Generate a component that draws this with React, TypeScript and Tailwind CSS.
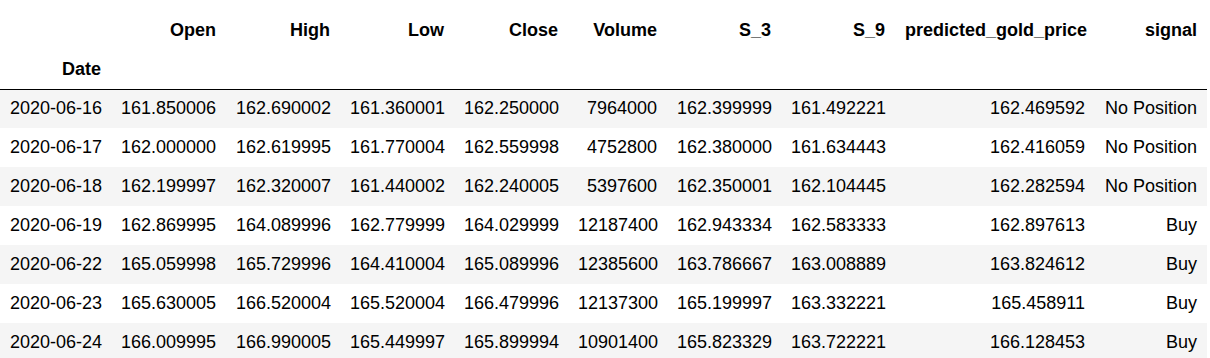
import React from 'react';

interface Row {
  date: string;
  open: string;
  high: string;
  low: string;
  close: string;
  volume: string;
  s3: string;
  s9: string;
  predicted: string;
  signal: string;
}

const rows: Row[] = [
  { date: '2020-06-16', open: '161.850006', high: '162.690002', low: '161.360001', close: '162.250000', volume: '7964000', s3: '162.399999', s9: '161.492221', predicted: '162.469592', signal: 'No Position' },
  { date: '2020-06-17', open: '162.000000', high: '162.619995', low: '161.770004', close: '162.559998', volume: '4752800', s3: '162.380000', s9: '161.634443', predicted: '162.416059', signal: 'No Position' },
  { date: '2020-06-18', open: '162.199997', high: '162.320007', low: '161.440002', close: '162.240005', volume: '5397600', s3: '162.350001', s9: '162.104445', predicted: '162.282594', signal: 'No Position' },
  { date: '2020-06-19', open: '162.869995', high: '164.089996', low: '162.779999', close: '164.029999', volume: '12187400', s3: '162.943334', s9: '162.583333', predicted: '162.897613', signal: 'Buy' },
  { date: '2020-06-22', open: '165.059998', high: '165.729996', low: '164.410004', close: '165.089996', volume: '12385600', s3: '163.786667', s9: '163.008889', predicted: '163.824612', signal: 'Buy' },
  { date: '2020-06-23', open: '165.630005', high: '166.520004', low: '165.520004', close: '166.479996', volume: '12137300', s3: '165.199997', s9: '163.332221', predicted: '165.458911', signal: 'Buy' },
  { date: '2020-06-24', open: '166.009995', high: '166.990005', low: '165.449997', close: '165.899994', volume: '10901400', s3: '165.823329', s9: '163.722221', predicted: '166.128453', signal: 'Buy' },
];

const columns = ['Open', 'High', 'Low', 'Close', 'Volume', 'S_3', 'S_9', 'predicted_gold_price', 'signal'];
const widths = [111, 115, 114, 114, 114, 99, 114, 114, 200, 112];

export default function App() {
  return (
    <div className="bg-white pt-[11px] h-[358px] overflow-hidden">
      <table
        className="table-fixed border-collapse text-black text-[18px] leading-[21px]"
        style={{ fontFamily: '"Liberation Sans", Arial, sans-serif', width: 1207 }}
      >
        <colgroup>
          {widths.map((w, i) => (
            <col key={i} style={{ width: w }} />
          ))}
        </colgroup>
        <thead>
          <tr className="h-[39px]">
            <th className="px-[10px] text-right font-bold"></th>
            {columns.map(c => (
              <th key={c} className="px-[10px] text-right font-bold whitespace-nowrap">
                {c}
              </th>
            ))}
          </tr>
          <tr className="h-[39px] border-b border-black">
            <th className="px-[10px] text-right font-bold">Date</th>
            {columns.map(c => (
              <th key={c} className="px-[10px]"></th>
            ))}
          </tr>
        </thead>
        <tbody>
          {rows.map((r, i) => (
            <tr key={r.date} className={`h-[39px] ${i % 2 === 0 ? 'bg-[#f5f5f5]' : 'bg-white'}`}>
              <td className="px-[10px] text-right whitespace-nowrap">{r.date}</td>
              <td className="px-[10px] text-right">{r.open}</td>
              <td className="px-[10px] text-right">{r.high}</td>
              <td className="px-[10px] text-right">{r.low}</td>
              <td className="px-[10px] text-right">{r.close}</td>
              <td className="px-[10px] text-right">{r.volume}</td>
              <td className="px-[10px] text-right">{r.s3}</td>
              <td className="px-[10px] text-right">{r.s9}</td>
              <td className="px-[10px] text-right">{r.predicted}</td>
              <td className="px-[10px] text-right whitespace-nowrap">{r.signal}</td>
            </tr>
          ))}
        </tbody>
      </table>
    </div>
  );
}
